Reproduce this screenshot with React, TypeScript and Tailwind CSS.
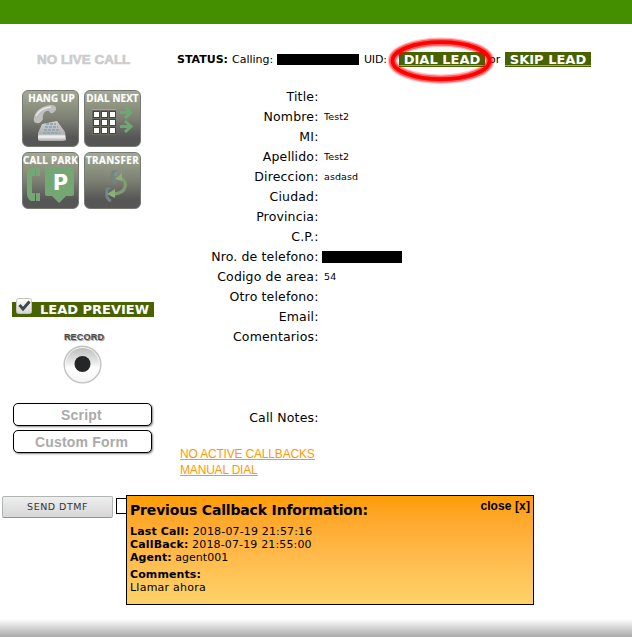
import React from "react";

const fields: { label: string; value?: string; redacted?: boolean }[] = [
  { label: "Title:" },
  { label: "Nombre:", value: "Test2" },
  { label: "MI:" },
  { label: "Apellido:", value: "Test2" },
  { label: "Direccion:", value: "asdasd" },
  { label: "Ciudad:" },
  { label: "Provincia:" },
  { label: "C.P.:" },
  { label: "Nro. de telefono:", redacted: true },
  { label: "Codigo de area:", value: "54" },
  { label: "Otro telefono:" },
  { label: "Email:" },
  { label: "Comentarios:" },
];

function Tile({ title, tracking, children }: { title: string; tracking: string; children: React.ReactNode }) {
  return (
    <button className="relative h-[57px] w-[57px] overflow-hidden rounded-[6px] border border-[#777a73] bg-linear-to-b from-[#a3aa92] via-[#7d8073] via-50% to-[#565656] to-85%">
      <svg className="absolute -left-px -top-px" width="57" height="57" viewBox="0 0 57 57">{children}</svg>
      <span className={"absolute inset-x-[-6px] top-[2px] flex justify-center whitespace-nowrap font-['Open_Sans','Noto_Sans',sans-serif] text-[9.8px] leading-[12px] font-bold text-white [-webkit-text-stroke:0.2px_white] " + tracking}>
        {title}
      </span>
    </button>
  );
}

function HangUp() {
  return (
    <Tile title="HANG UP" tracking="tracking-[0.15px] pl-[2px]">
      <defs>
        <linearGradient id="phone" x1="0" y1="0" x2="0" y2="1">
          <stop offset="0" stopColor="#d2d3d0" />
          <stop offset="0.65" stopColor="#b0b1ae" />
          <stop offset="0.8" stopColor="#eeeeee" />
          <stop offset="1" stopColor="#a3a3a3" />
        </linearGradient>
      </defs>
      <path d="M20 34 L35 31 L43 42 L44 50 Q43 51 38 51 L19 51 Q16 51 16 49 L16 43Z" fill="url(#phone)" />
      <path d="M12 28 C13 20 22 15 29 15 Q35 15 34 20 L31 23 Q28 24 27 21 C23 20 20 25 21 29 Q19 34 14 33 Q11 32 12 28Z" fill="#bfc0bd" />
      <path d="M14 26 Q18 18 29 17" stroke="#e7e7e5" strokeWidth="1.5" fill="none" />
      <path d="M24 34 H34 M23 37 H36 M22 40 H38 M21 43 H38" stroke="#93a9b6" strokeWidth="1.8" strokeDasharray="3 1" />
      <path d="M17 46.5 H43" stroke="#ededed" strokeWidth="2" />
    </Tile>
  );
}

function DialNext() {
  return (
    <Tile title="DIAL NEXT" tracking="tracking-[0.15px]">
      <rect x="8" y="19" width="24" height="26" fill="#68695f" />
      <path d="M8 19.5H32" stroke="#a4aa8e" strokeWidth="1" />
      {[21, 29, 37].map((y) =>
        [9, 17, 25].map((x) => (
          <rect key={x + "-" + y} x={x + 0.5} y={y + 0.5} width="6" height="6" fill="#fff" stroke="#444" />
        )),
      )}
      <path d="M36 22.5H47M41 17L47 22.5L41 28M36 36.5H47M41 31L47 36.5L41 42" fill="none" stroke="#70a574" strokeWidth="3" />
    </Tile>
  );
}

function CallPark() {
  return (
    <Tile title="CALL PARK" tracking="tracking-[0.3px]">
      <path d="M9 16H13V24H10V41H13V49H9Q5 47 5 41V23Q5 17 9 16Z M14 16H18V24H14Z M14 41H18V49H14Z" fill="#75a775" />
      <path d="M25 15H50Q52 15 52 17V42Q52 44 50 44H44L37 51L30 44H25Q23 44 23 42V17Q23 15 25 15Z" fill="#75a775" />
      <text x="38.5" y="37.5" textAnchor="middle" fontFamily="DejaVu Sans" fontWeight="bold" fontSize="21" fill="#fff">P</text>
    </Tile>
  );
}

function Transfer() {
  return (
    <Tile title="TRANSFER" tracking="tracking-[0.45px]">
      <g fill="none">
        <path d="M32.5 20 Q27.5 18 28 26 L31 32" stroke="#6f8588" strokeWidth="2.8" />
        <path d="M32 20 L32 24" stroke="#7f9699" strokeWidth="2.5" />
        <path d="M27 49 Q21 47 23 37 L26 36" stroke="#6f8588" strokeWidth="2.8" />
        <path d="M35 25 C46 30 42 41 30 42" stroke="#7d9e70" strokeWidth="3.3" />
      </g>
      <path d="M31 27L38 21L38 29Z M23 42L31 37L31 46Z" fill="#8caf7c" />
    </Tile>
  );
}

function LeadPreview() {
  return (
    <div className="relative ml-[12px] mt-[93px] h-[15px] w-[142px] bg-[#486200]">
      <svg className="absolute left-[4px] top-[-4px]" width="17" height="17" viewBox="0 0 17 17">
        <defs>
          <linearGradient id="check" x1="0" y1="0" x2="0" y2="1">
            <stop stopColor="#fff" />
            <stop offset="1" stopColor="#d5d5d5" />
          </linearGradient>
        </defs>
        <rect x="0.5" y="0.5" width="15" height="15" rx="2" fill="url(#check)" stroke="#c1c5ba" />
        <path d="M3.5 7L7 11L13.5 3.5" fill="none" stroke="#3f484d" strokeWidth="3" />
      </svg>
      <span className="absolute left-[28px] top-0 whitespace-nowrap text-[13px] leading-[15px] font-bold text-white">LEAD PREVIEW</span>
    </div>
  );
}

function RecordButton() {
  return (
    <div className="ml-[62px] mt-[14px] h-[56px] w-[44px]">
      <div className="h-[13px] whitespace-nowrap text-center font-['Liberation_Sans',Arial,sans-serif] text-[9px] leading-[13px] font-bold tracking-[0.2px] text-[#4b4b4b] [text-shadow:1px_1px_1px_#888]">RECORD</div>
      <svg width="42" height="42" viewBox="0 0 42 42">
        <defs>
          <linearGradient id="rim" x1="0" y1="0" x2="0" y2="1">
            <stop stopColor="#b9b9b9" />
            <stop offset="0.4" stopColor="#e3e3e3" />
            <stop offset="0.6" stopColor="#ffffff" />
            <stop offset="1" stopColor="#f4f4f4" />
          </linearGradient>
        </defs>
        <circle cx="20.5" cy="20.5" r="18.3" fill="url(#rim)" stroke="#c4c4c4" strokeWidth="1.5" />
        <circle cx="20.5" cy="20.5" r="17" fill="none" stroke="#f5f5f5" />
        <circle cx="20.5" cy="20" r="8" fill="#252628" />
      </svg>
    </div>
  );
}

function FormButton({ children }: { children: React.ReactNode }) {
  return (
    <button className="h-[23px] w-[139px] rounded-[5px] border border-black bg-white text-center font-['Liberation_Sans',Arial,sans-serif] text-[14px] leading-[20px] font-bold tracking-[0.2px] text-[#aaa] shadow-[1px_1px_2px_#888]">
      <span className="block pr-[2px]">{children}</span>
    </button>
  );
}

function LeadLink({ children }: { children: React.ReactNode }) {
  return (
    <a className="h-[15px] w-[86px] bg-[#486200] pb-px">
      <span className="block h-[14px] whitespace-nowrap border-b border-[#e89a00] text-center text-[13px] leading-[15px] font-bold text-white">{children}</span>
    </a>
  );
}

function Popup() {
  return (
    <section className="absolute left-[126px] top-0 h-[110px] w-[408px] border border-black bg-linear-to-b from-[#ff9c00] to-[#ffd26a] pl-[3px] text-[11px] leading-[13px]">
      <div className="flex justify-between">
        <h2 className="pt-[5px] text-[14px] leading-[18px] font-bold tracking-[-0.17px]">Previous Callback Information:</h2>
        <button className="mr-[3px] h-[20px] font-['Liberation_Sans',Arial,sans-serif] text-[12px] font-bold leading-[20px] tracking-[0.1px]">close [x]</button>
      </div>
      <p className="mt-[6px] tracking-[0.15px]"><b>Last Call:</b> 2018-07-19 21:57:16</p>
      <p className="tracking-[0.15px]"><b>CallBack:</b> 2018-07-19 21:55:00</p>
      <p className="tracking-[0.05px]"><b>Agent:</b> agent001</p>
      <p className="mt-[4px] tracking-[0.1px]"><b>Comments:</b></p>
      <p className="tracking-[0.24px]">Llamar ahora</p>
    </section>
  );
}

export default function App() {
  return (
    <div className="flex h-[637px] w-[632px] flex-col overflow-hidden bg-white font-['DejaVu_Sans',sans-serif] text-black">
      <header className="h-[24px] shrink-0 bg-[#438f00]" />
      <div className="flex h-[471px] shrink-0">
        <aside className="w-[177px] shrink-0 pt-[28px]">
          <div className="ml-[37px] h-[16px] origin-left scale-x-[1.12] whitespace-nowrap font-['Liberation_Sans',Arial,sans-serif] text-[12px] leading-[16px] font-bold text-[#ccc] [-webkit-text-stroke:0.6px_#ccc]">NO LIVE CALL</div>
          <div className="ml-[22px] mt-[22px] grid w-[119px] grid-cols-2 gap-[5px]">
            <HangUp />
            <DialNext />
            <CallPark />
            <Transfer />
          </div>
          <LeadPreview />
          <RecordButton />
          <div className="ml-[13px] mt-[16px] flex flex-col gap-[4px]">
            <FormButton>Script</FormButton>
            <FormButton>Custom Form</FormButton>
          </div>
        </aside>
        <main className="relative min-w-0 flex-1 pt-[28px]">
          <div className="flex h-[15px] whitespace-nowrap text-[11px] leading-[16px]">
            <b className="w-[55px]">STATUS:</b>
            <span className="w-[45px]">Calling:</span>
            <span className="mt-[2px] h-[11px] w-[82px] bg-black" />
            <span className="ml-[5px] w-[35px] tracking-[-0.2px]">UID:</span>
            <LeadLink>DIAL LEAD</LeadLink>
            <span className="w-[20px] pl-[4px]">or</span>
            <LeadLink>SKIP LEAD</LeadLink>
          </div>
          <svg className="absolute left-[204px] top-[12px]" width="120" height="50" viewBox="0 0 120 50">
            <g fill="none" stroke="#ff0000">
              <ellipse cx="60" cy="24.7" rx="48.5" ry="18.5" strokeOpacity="0.25" strokeWidth="9.5" />
              <ellipse cx="60" cy="24.7" rx="48.5" ry="18.5" strokeOpacity="0.5" strokeWidth="7" />
              <ellipse cx="60" cy="24.7" rx="48.5" ry="18.5" strokeWidth="3.8" />
            </g>
          </svg>
          <div className="mt-[20px]">
            {fields.map((f) => (
              <div key={f.label} className="flex h-[20px] items-center">
                <span className="w-[141.5px] whitespace-nowrap text-right text-[12.5px] leading-[20px] tracking-[0.15px]">{f.label}</span>
                {f.value && <span className="ml-[5.5px] text-[9.5px] leading-[20px] tracking-[0.1px]">{f.value}</span>}
                {f.redacted && <span className="ml-[3.5px] h-[12px] w-[80px] bg-black" />}
              </div>
            ))}
          </div>
          <div className="mt-[61px] w-[141.5px] text-right text-[12.5px] leading-[20px] tracking-[0.15px]">Call Notes:</div>
          <div className="ml-[3px] mt-[18px] flex flex-col items-start font-['Liberation_Sans',Arial,sans-serif] text-[12px] leading-[16px] tracking-[-0.18px] text-[#ff9900] underline">
            <a>NO ACTIVE CALLBACKS</a>
            <a>MANUAL DIAL</a>
          </div>
        </main>
      </div>
      <div className="relative flex h-[124px] shrink-0">
        <button className="ml-[2px] mt-px h-[22px] w-[111px] rounded-[2px] border border-[#b1b5b1] border-b-[#929292] bg-linear-to-b from-[#eeeeee] to-[#d7d7d7] text-[9.5px] leading-[20px] tracking-[0.5px] text-[#333]">SEND DTMF</button>
        <input className="ml-[3px] mt-[3px] h-[16px] w-[50px] border border-black bg-white" />
        <Popup />
      </div>
      <footer className="h-[18px] shrink-0 bg-linear-to-b from-white to-[#aaa]" />
    </div>
  );
}
